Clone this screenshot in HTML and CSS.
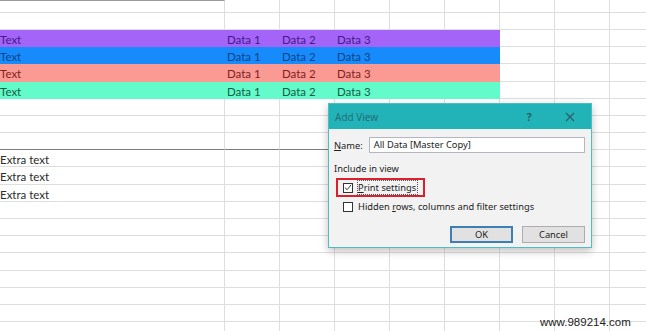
FILE: index.html
```html
<!DOCTYPE html>
<html lang="en">
<head>
  <meta charset="UTF-8" />
  <title>Add View</title>
  <link rel="stylesheet" href="styles.css">
</head>

<body>
  <div class="sheet" id="sheet"></div>

  <div class="dialog">
    <div class="dialog-title">
      <span class="title-text">Add View</span>
      <span class="title-btn help">?</span>
      <span class="title-btn close">
        <svg width="10" height="10" viewBox="0 0 10 10"><path d="M1 1 L9 9 M9 1 L1 9" stroke="#2c6266" stroke-width="1.3" fill="none"/></svg>
      </span>
    </div>
    <div class="dialog-body">
      <div class="name-row">
        <span class="label"><u>N</u>ame:</span>
        <div class="input">All Data [Master Copy]</div>
      </div>
      <div class="group-label">Include in view</div>
      <div class="check-row highlight">
        <span class="box checked">
          <svg width="9" height="9" viewBox="0 0 9 9"><path d="M1 4.5 L3.5 7 L8 1.5" stroke="#333" stroke-width="1.1" fill="none"/></svg>
        </span>
        <span class="focus"><u>P</u>rint settings</span>
      </div>
      <div class="check-row">
        <span class="box"></span>
        <span>Hidden <u>r</u>ows, columns and filter settings</span>
      </div>
      <div class="buttons">
        <div class="button default">OK</div>
        <div class="button">Cancel</div>
      </div>
    </div>
  </div>

  <div class="watermark">www.989214.com</div>

  <script>
    const sheet = document.getElementById('sheet');
    const columns = 9;
    const rows = 20;

    // row index -> fill and texts
    const filled = {
      2: { color: 'purple', texts: ['Text', 'Data 1', 'Data 2', 'Data 3'] },
      3: { color: 'blue', texts: ['Text', 'Data 1', 'Data 2', 'Data 3'] },
      4: { color: 'pink', texts: ['Text', 'Data 1', 'Data 2', 'Data 3'] },
      5: { color: 'green', texts: ['Text', 'Data 1', 'Data 2', 'Data 3'] }
    };
    const extra = [9, 10, 11];

    for (let r = 0; r < rows; r++) {
      for (let c = 0; c < columns; c++) {
        const cell = document.createElement('div');
        cell.classList.add('cell');
        if (c === 0) cell.classList.add('first');
        if (r === 0 && c === 0) cell.classList.add('top-edge');
        const row = filled[r];
        if (row && c < 6) {
          cell.classList.add('fill', row.color);
          if (row.texts[c]) cell.textContent = row.texts[c];
        }
        if (extra.includes(r) && c === 0) cell.textContent = 'Extra text';
        if (r === 8 && c < 6) cell.classList.add('rule');
        sheet.appendChild(cell);
      }
    }
  </script>
</body>
</html>
```

FILE: styles.css
```css
body {
  margin: 0;
  width: 646px;
  height: 331px;
  overflow: hidden;
  background: #ffffff;
  position: relative;
  font-family: Lato, 'Liberation Sans', sans-serif;
}

.sheet {
  display: grid;
  grid-template-columns: 225px repeat(8, 55px);
  grid-template-rows: 12.8px;
  grid-auto-rows: 17.2px;
}

.cell {
  box-sizing: border-box;
  border-right: 1px solid #dedede;
  border-bottom: 1px solid #dedede;
  font-size: 11.5px;
  line-height: 16px;
  padding: 2px 0 0 2px;
  white-space: nowrap;
  color: #2b2b2b;
}

.cell.first {
  padding-left: 0;
}

.cell.top-edge {
  border-top: 1px solid #9a9a9a;
}

.cell.fill {
  border-color: transparent;
}

.cell.rule {
  border-bottom: 1px solid #7d7d7d;
}

.purple {
  background: #a464f7;
  color: #45198c;
}

.blue {
  background: #178bfb;
  color: #0a4488;
}

.pink {
  background: #fb9a93;
  color: #7e2224;
}

.green {
  background: #64fbcb;
  color: #135f43;
}

.dialog {
  position: absolute;
  left: 328px;
  top: 103px;
  width: 264px;
  height: 145px;
  box-sizing: border-box;
  border: 1px solid #4fbcc1;
  background: #f2f2f2;
  box-shadow: 0 3px 8px rgba(0, 0, 0, 0.25);
  font-family: 'Noto Sans', 'Liberation Sans', sans-serif;
  font-size: 9.3px;
  color: #222;
  display: flex;
  flex-direction: column;
}

.dialog-title {
  height: 25px;
  background: #22b3b9;
  display: flex;
  align-items: center;
  padding-left: 6px;
}

.title-text {
  flex: 1;
  color: #256f75;
  font-size: 10px;
}

.title-btn {
  width: 40px;
  text-align: center;
  color: #2c6266;
  font-size: 11px;
  font-weight: bold;
}

.title-btn.close {
  display: flex;
  justify-content: center;
  width: 42px;
}

.dialog-body {
  padding: 8px 6px 0 5px;
}

.name-row {
  display: flex;
  align-items: center;
  gap: 6px;
}

.input {
  flex: 1;
  height: 16px;
  box-sizing: border-box;
  border: 1px solid #b4b7bd;
  background: #fff;
  padding-left: 4px;
  line-height: 14px;
}

.group-label {
  margin-top: 9px;
  line-height: 14px;
}

.check-row {
  display: flex;
  align-items: center;
  gap: 5px;
  margin-left: 9px;
  height: 15px;
  margin-top: 2px;
}

.check-row.highlight {
  margin-top: 2px;
  margin-left: 2px;
  padding-left: 5px;
  width: 80px;
  height: 15px;
  border: 2px solid #d8212b;
}

.box {
  width: 10px;
  height: 10px;
  box-sizing: border-box;
  border: 1px solid #333;
  background: #fff;
  display: flex;
  align-items: center;
  justify-content: center;
}

.focus {
  outline: 1px dotted #555;
  padding-right: 1px;
}

.buttons {
  display: flex;
  justify-content: flex-end;
  gap: 9px;
  margin-top: 12px;
}

.button {
  width: 63px;
  height: 17px;
  box-sizing: border-box;
  border: 1px solid #adadad;
  background: #e1e1e1;
  text-align: center;
  line-height: 15px;
}

.button.default {
  border: 2px solid #3e7fb3;
  line-height: 13px;
}

.watermark {
  position: absolute;
  left: 540px;
  top: 316px;
  font-family: 'Liberation Sans', Arial, sans-serif;
  font-size: 11.5px;
  color: #222;
}
```
